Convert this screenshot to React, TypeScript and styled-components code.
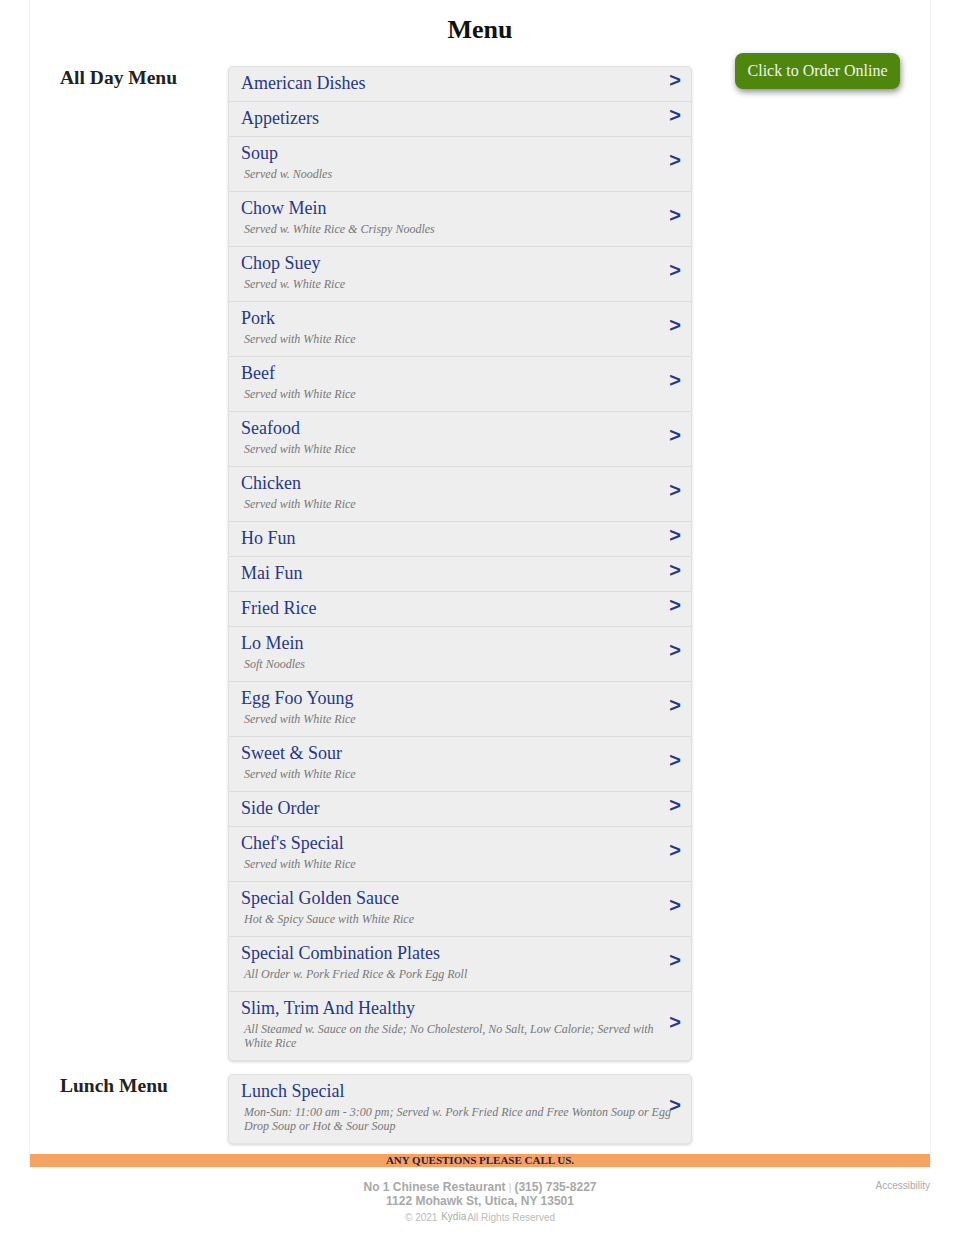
import React from "react";
import styled, { createGlobalStyle } from "styled-components";

const GlobalStyle = createGlobalStyle`
  html, body { margin: 0; padding: 0; background: #fff; }
  body { font-family: "Liberation Serif", "Times New Roman", serif; color: #222; }
  * { box-sizing: border-box; }
`;

const Page = styled.div`
  width: 902px;
  margin: 0 auto;
  border-left: 1px solid #f2f2f2;
  border-right: 1px solid #f2f2f2;
`;

const Title = styled.h1`
  margin: 0;
  padding-top: 15px;
  height: 53px;
  font-size: 26px;
  line-height: 30px;
  font-weight: bold;
  text-align: center;
  color: #111;
`;

const Sections = styled.div`
  display: grid;
  grid-template-columns: 168px 464px 1fr;
  row-gap: 0;
  padding: 0 30px 10px 30px;
  align-items: start;
`;

const SectionLabel = styled.h2`
  margin: 13px 0 0 0;
  font-size: 19.5px;
  line-height: 24px;
  font-weight: bold;
  color: #222;
`;

const List = styled.div`
  margin-top: 13px;
  background: #eee;
  border: 1px solid #e2e2e2;
  border-radius: 5px;
  box-shadow: 0 1px 3px rgba(0, 0, 0, 0.18);
  overflow: hidden;
`;

const Row = styled.div`
  position: relative;
  padding: 5px 20px 7px 12px;
  border-bottom: 1px solid #dcdcdc;
  &:last-child { border-bottom: none; }
`;

const ItemTitle = styled.div`
  font-size: 18px;
  line-height: 22px;
  color: #26388a;
`;

const ItemNote = styled.div`
  margin: 3px 0 3px 3px;
  font-size: 12px;
  line-height: 14px;
  font-style: italic;
  color: #777;
`;

const Arrow = styled.span`
  position: absolute;
  right: 10px;
  top: 50%;
  transform: translateY(calc(-50% - 4px));
  font-family: "Liberation Sans", Arial, sans-serif;
  font-weight: bold;
  font-size: 20px;
  line-height: 20px;
  color: #26388a;
`;

const ButtonCell = styled.div`
  display: flex;
  justify-content: flex-end;
`;

const OrderButton = styled.a`
  display: inline-flex;
  align-items: center;
  height: 36px;
  padding: 0 12.5px;
  border-radius: 8px;
  background: #4e870c;
  color: #f2f2f2;
  font-size: 16px;
  text-decoration: none;
  box-shadow: 1px 3px 6px rgba(0, 0, 0, 0.45);
`;

const Banner = styled.div`
  height: 13px;
  background: #f4a460;
  text-align: center;
  font-size: 11px;
  line-height: 13px;
  font-weight: bold;
  color: #2a1c58;
`;

const Footer = styled.footer`
  width: 902px;
  margin: 0 auto;
  padding: 13px 1px 20px 1px;
  display: grid;
  grid-template-columns: 1fr auto 1fr;
  font-family: "Liberation Sans", Arial, sans-serif;
`;

const FooterCenter = styled.div`
  grid-column: 2;
  text-align: center;
`;

const FooterLine = styled.div`
  font-size: 12px;
  line-height: 14px;
  font-weight: bold;
  color: #a8a8a8;
`;

const Sep = styled.span`
  font-weight: normal;
  font-size: 11px;
  color: #ccc;
  margin: 0 3px;
`;

const Copy = styled.div`
  margin-top: 2px;
  font-size: 10px;
  line-height: 14px;
  color: #bbb;
`;

const Brand = styled.sup`
  font-size: 10px;
  vertical-align: 1px;
  color: #aaa;
  margin: 0 1px;
`;

const Access = styled.a`
  justify-self: end;
  font-size: 10px;
  color: #aaa;
  text-decoration: none;
`;

type Item = { title: string; note?: string };

const allDay: Item[] = [
  { title: "American Dishes" },
  { title: "Appetizers" },
  { title: "Soup", note: "Served w. Noodles" },
  { title: "Chow Mein", note: "Served w. White Rice & Crispy Noodles" },
  { title: "Chop Suey", note: "Served w. White Rice" },
  { title: "Pork", note: "Served with White Rice" },
  { title: "Beef", note: "Served with White Rice" },
  { title: "Seafood", note: "Served with White Rice" },
  { title: "Chicken", note: "Served with White Rice" },
  { title: "Ho Fun" },
  { title: "Mai Fun" },
  { title: "Fried Rice" },
  { title: "Lo Mein", note: "Soft Noodles" },
  { title: "Egg Foo Young", note: "Served with White Rice" },
  { title: "Sweet & Sour", note: "Served with White Rice" },
  { title: "Side Order" },
  { title: "Chef's Special", note: "Served with White Rice" },
  { title: "Special Golden Sauce", note: "Hot & Spicy Sauce with White Rice" },
  { title: "Special Combination Plates", note: "All Order w. Pork Fried Rice & Pork Egg Roll" },
  {
    title: "Slim, Trim And Healthy",
    note: "All Steamed w. Sauce on the Side; No Cholesterol, No Salt, Low Calorie; Served with White Rice",
  },
];

const lunch: Item[] = [
  {
    title: "Lunch Special",
    note: "Mon-Sun: 11:00 am - 3:00 pm; Served w. Pork Fried Rice and Free Wonton Soup or Egg Drop Soup or Hot & Sour Soup",
  },
];

const MenuList = ({ items }: { items: Item[] }) => (
  <List>
    {items.map((it) => (
      <Row key={it.title}>
        <ItemTitle>{it.title}</ItemTitle>
        {it.note && <ItemNote>{it.note}</ItemNote>}
        <Arrow>&gt;</Arrow>
      </Row>
    ))}
  </List>
);

export default function App() {
  return (
    <>
      <GlobalStyle />
      <Page>
        <Title>Menu</Title>
        <Sections>
          <SectionLabel>All Day Menu</SectionLabel>
          <MenuList items={allDay} />
          <ButtonCell>
            <OrderButton href="#">Click to Order Online</OrderButton>
          </ButtonCell>
          <SectionLabel>Lunch Menu</SectionLabel>
          <MenuList items={lunch} />
          <div />
        </Sections>
        <Banner>ANY QUESTIONS PLEASE CALL US.</Banner>
      </Page>
      <Footer>
        <FooterCenter>
          <FooterLine>
            No 1 Chinese Restaurant<Sep>|</Sep>(315) 735-8227
          </FooterLine>
          <FooterLine>1122 Mohawk St, Utica, NY 13501</FooterLine>
          <Copy>
            © 2021 <Brand>Kydia</Brand>All Rights Reserved
          </Copy>
        </FooterCenter>
        <Access href="#">Accessibility</Access>
      </Footer>
    </>
  );
}
